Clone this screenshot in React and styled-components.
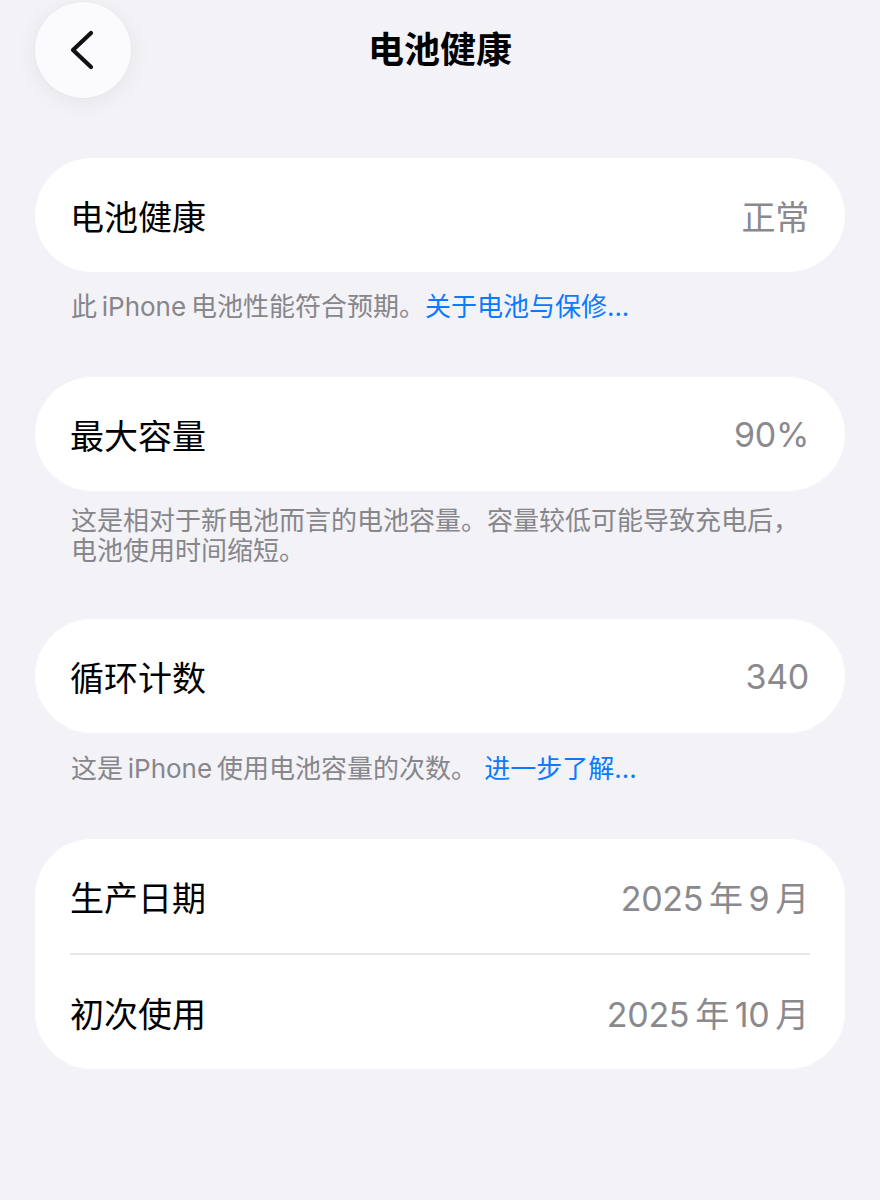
import React from 'react';
import styled, { createGlobalStyle } from 'styled-components';

const GlobalStyle = createGlobalStyle`
  html, body {
    margin: 0;
    padding: 0;
    background: #f2f2f7;
  }
  body {
    min-height: 1200px;
    font-family: Inter, "Noto Sans CJK SC", sans-serif;
    -webkit-font-smoothing: antialiased;
  }
`;

const Page = styled.div`
  padding: 2px 35px 0;
  display: flex;
  flex-direction: column;
`;

const Header = styled.div`
  display: grid;
  grid-template-columns: 96px 1fr 96px;
  align-items: center;
  height: 96px;
  margin-bottom: 60px;
`;

const BackButton = styled.button`
  width: 96px;
  height: 96px;
  border-radius: 50%;
  border: none;
  padding: 0;
  background: #fbfbfd;
  box-shadow: 0 4px 24px rgba(0, 0, 0, 0.06), 0 0 0 1px rgba(0, 0, 0, 0.015);
  display: flex;
  align-items: center;
  justify-content: center;
`;

const Title = styled.h1`
  margin: 0 0 6px;
  text-align: center;
  font-family: "Noto Sans CJK SC", sans-serif;
  font-size: 36px;
  font-weight: 700;
  color: #000;
  line-height: 1;
`;

const Card = styled.div`
  background: #fff;
  border-radius: 57px;
  display: flex;
  flex-direction: column;
`;

const Row = styled.div`
  height: 114px;
  padding: 0 36px 0 35px;
  display: flex;
  align-items: center;
  justify-content: space-between;
`;

const Divider = styled.div`
  height: 2px;
  margin: 0 35px;
  background: #e6e6eb;
`;

const Label = styled.span`
  font-family: "Noto Sans CJK SC", sans-serif;
  font-size: 34px;
  color: #000;
`;

const Value = styled.span`
  font-size: 34px;
  color: #8a8a8e;
  letter-spacing: -0.3px;
`;

const Footnote = styled.p`
  margin: ${p => p.$top}px 0 0;
  padding: 0 36px;
  font-size: 26px;
  line-height: 30px;
  color: #86868b;
`;

const Link = styled.a`
  color: #0a7aff;
  text-decoration: none;
`;

const Section = styled.section`
  margin-bottom: ${p => p.$gap}px;
`;

const Chevron = () => (
  <svg width="28" height="44" viewBox="0 0 28 44" fill="none">
    <path d="M22 5 L4 22 L22 39" stroke="#111" strokeWidth="4.2" strokeLinecap="round" strokeLinejoin="round" />
  </svg>
);

export default function App() {
  return (
    <>
      <GlobalStyle />
      <Page>
        <Header>
          <BackButton aria-label="返回">
            <Chevron />
          </BackButton>
          <Title>电池健康</Title>
          <span />
        </Header>

        <Section $gap={55}>
          <Card>
            <Row>
              <Label>电池健康</Label>
              <Value>正常</Value>
            </Row>
          </Card>
          <Footnote $top={20}>
            此{'\u2009'}iPhone{'\u2009'}电池性能符合预期。<Link>关于电池与保修...</Link>
          </Footnote>
        </Section>

        <Section $gap={53}>
          <Card>
            <Row>
              <Label>最大容量</Label>
              <Value>90%</Value>
            </Row>
          </Card>
          <Footnote $top={15}>
            这是相对于新电池而言的电池容量。容量较低可能导致充电后，电池使用时间缩短。
          </Footnote>
        </Section>

        <Section $gap={55}>
          <Card>
            <Row>
              <Label>循环计数</Label>
              <Value>340</Value>
            </Row>
          </Card>
          <Footnote $top={21}>
            这是{'\u2009'}iPhone{'\u2009'}使用电池容量的次数。 <Link>进一步了解...</Link>
          </Footnote>
        </Section>

        <Section $gap={0}>
          <Card>
            <Row>
              <Label>生产日期</Label>
              <Value>2025{'\u2009'}年{'\u2009'}9{'\u2009'}月</Value>
            </Row>
            <Divider />
            <Row>
              <Label>初次使用</Label>
              <Value>2025{'\u2009'}年{'\u2009'}10{'\u2009'}月</Value>
            </Row>
          </Card>
        </Section>
      </Page>
    </>
  );
}
